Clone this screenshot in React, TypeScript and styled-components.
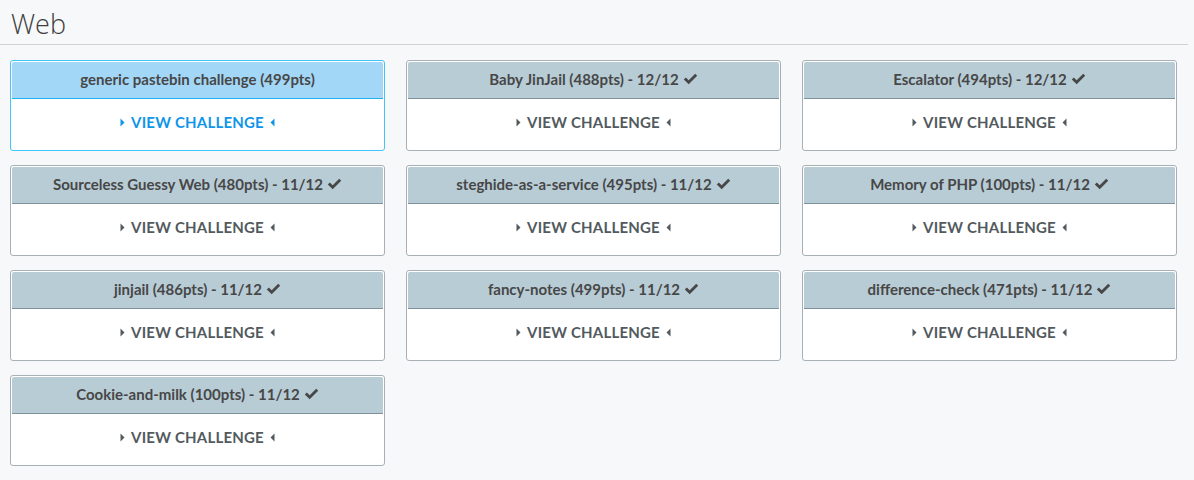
import React from "react";
import styled, { createGlobalStyle, css } from "styled-components";

const GlobalStyle = createGlobalStyle`
  html, body {
    margin: 0;
    background: #f7f8fa;
  }
  body {
    font-family: "Lato", "Open Sans", sans-serif;
    color: #444;
  }
`;

const Page = styled.div`
  width: 1194px;
  height: 480px;
  overflow: hidden;
`;

const Heading = styled.h2`
  margin: 0;
  width: 1188px;
  height: 45px;
  box-sizing: border-box;
  padding: 7px 0 0 11px;
  border-bottom: 1px solid #cfd1d3;
  font-family: "Open Sans", sans-serif;
  font-weight: 300;
  font-size: 27px;
  line-height: 34px;
  color: #3e3e3e;
`;

const Grid = styled.div`
  display: grid;
  grid-template-columns: repeat(3, 375px);
  column-gap: 21px;
  row-gap: 14px;
  padding: 15px 0 0 10px;
`;

const Card = styled.div<{ $active?: boolean }>`
  height: 91px;
  box-sizing: border-box;
  padding: 1px;
  background: #fff;
  border: 1px solid #a6b0b5;
  border-radius: 3px;
  display: flex;
  flex-direction: column;
  ${(p) =>
    p.$active &&
    css`
      border-color: #40c4fb;
    `}
`;

const Header = styled.div<{ $active?: boolean }>`
  height: 37px;
  box-sizing: border-box;
  background: ${(p) => (p.$active ? "#a3d7f7" : "#b8ccd6")};
  border-bottom: 1px solid ${(p) => (p.$active ? "#1fb2f3" : "#7f929c")};
  border-radius: 2px 2px 0 0;
  display: flex;
  align-items: center;
  justify-content: center;
  gap: 4px;
  font-weight: 700;
  font-size: 15px;
  color: #474747;
  padding-bottom: 3px;
`;

const Check = styled.svg`
  width: 15px;
  height: 12px;
  fill: #474747;
`;

const Body = styled.div<{ $active?: boolean }>`
  flex: 1;
  display: flex;
  align-items: center;
  justify-content: center;
  gap: 6px;
  font-weight: 700;
  font-size: 15px;
  letter-spacing: 0.2px;
  color: ${(p) => (p.$active ? "#0f96e9" : "#525a5e")};
  padding-bottom: 4px;
`;

const Caret = styled.svg`
  width: 5px;
  height: 9px;
  fill: currentColor;
`;

interface Challenge {
  name: string;
  points: number;
  solves?: string;
}

const challenges: Challenge[] = [
  { name: "generic pastebin challenge", points: 499 },
  { name: "Baby JinJail", points: 488, solves: "12/12" },
  { name: "Escalator", points: 494, solves: "12/12" },
  { name: "Sourceless Guessy Web", points: 480, solves: "11/12" },
  { name: "steghide-as-a-service", points: 495, solves: "11/12" },
  { name: "Memory of PHP", points: 100, solves: "11/12" },
  { name: "jinjail", points: 486, solves: "11/12" },
  { name: "fancy-notes", points: 499, solves: "11/12" },
  { name: "difference-check", points: 471, solves: "11/12" },
  { name: "Cookie-and-milk", points: 100, solves: "11/12" },
];

const CheckIcon = () => (
  <Check viewBox="0 0 14 12">
    <path d="M0.3 6.4 L2.3 4.4 L5.2 7.3 L11.7 0.8 L13.7 2.8 L5.2 11.3 Z" />
  </Check>
);

const ChallengeCard = ({ challenge }: { challenge: Challenge }) => {
  const active = !challenge.solves;
  return (
    <Card $active={active}>
      <Header $active={active}>
        <span>
          {challenge.name} ({challenge.points}pts)
          {challenge.solves ? ` - ${challenge.solves}` : ""}
        </span>
        {challenge.solves && <CheckIcon />}
      </Header>
      <Body $active={active}>
        <Caret viewBox="0 0 5 9">
          <path d="M0.5 0.5 L4.5 4.5 L0.5 8.5 Z" />
        </Caret>
        <span>VIEW CHALLENGE</span>
        <Caret viewBox="0 0 5 9">
          <path d="M4.5 0.5 L0.5 4.5 L4.5 8.5 Z" />
        </Caret>
      </Body>
    </Card>
  );
};

export default function App() {
  return (
    <Page>
      <GlobalStyle />
      <Heading>Web</Heading>
      <Grid>
        {challenges.map((c) => (
          <ChallengeCard key={c.name} challenge={c} />
        ))}
      </Grid>
    </Page>
  );
}
